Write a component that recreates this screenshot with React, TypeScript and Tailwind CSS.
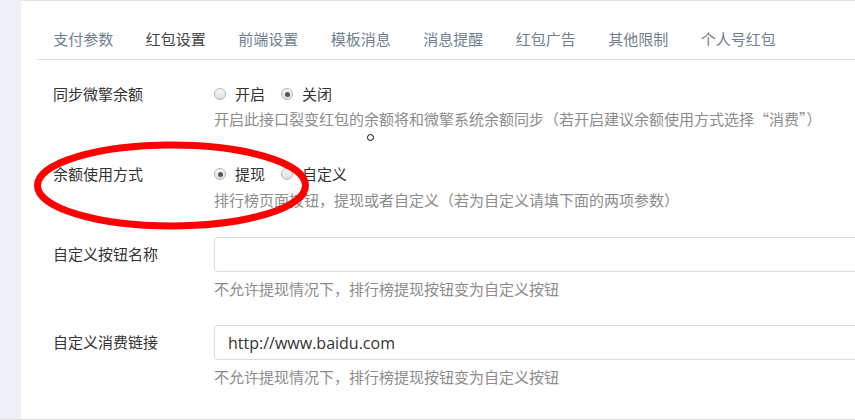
const cjk = "font-['Noto_Sans_CJK_SC','Noto_Sans',sans-serif]";

const tabs = ["支付参数", "红包设置", "前端设置", "模板消息", "消息提醒", "红包广告", "其他限制", "个人号红包"];

function Radio({ checked }: { checked?: boolean }) {
  return (
    <span className="inline-flex h-[12px] w-[12px] items-center justify-center rounded-full border border-[#b5b5b5] bg-linear-to-b from-[#fbfbfb] to-[#dedede]">
      {checked && <span className="h-[5px] w-[5px] rounded-full bg-[#555]" />}
    </span>
  );
}

function RadioGroup({ options, value }: { options: string[]; value: number }) {
  return (
    <div className="flex h-[20px] items-center">
      {options.map((o, i) => (
        <label key={o} className={`flex items-center ${i > 0 ? "ml-[16px]" : ""}`}>
          <Radio checked={i === value} />
          <span className="ml-[9px] leading-[20px] text-[#333]">{o}</span>
        </label>
      ))}
    </div>
  );
}

function Help({ children, className = "" }: { children: React.ReactNode; className?: string }) {
  return <div className={`leading-[20px] text-[#8c8c8c] ${className}`}>{children}</div>;
}

export default function App() {
  return (
    <div className={`relative flex h-[420px] w-full overflow-hidden border-b border-[#dcdcdc] bg-white text-[15px] ${cjk}`}>
      <div className="w-[21px] shrink-0 bg-[#f0f1f6]" />
      <div className="flex-1 border-t border-[#e3e3e3] bg-white">
        <div className="ml-[16px] flex border-b border-[#e0e0e0]">
          {tabs.map((t, i) => (
            <div
              key={t}
              className={`px-[16.25px] pt-[28px] pb-[10px] leading-[20px] whitespace-nowrap ${i === 1 ? "text-[#444]" : "text-[#6f7f90]"}`}
            >
              {t}
            </div>
          ))}
        </div>

        <div className="pl-[32px]">
          <div className="mt-[24px] flex">
            <div className="h-[20px] w-[161px] shrink-0 leading-[20px] text-[#333]">同步微擎余额</div>
            <div>
              <RadioGroup options={["开启", "关闭"]} value={1} />
              <Help className="mt-[5px] whitespace-nowrap">
                开启此接口裂变红包的余额将和微擎系统余额同步（若开启建议余额使用方式选择“消费”）
              </Help>
            </div>
          </div>

          <div className="mt-[35px] flex">
            <div className="h-[20px] w-[161px] shrink-0 leading-[20px] text-[#333]">余额使用方式</div>
            <div>
              <RadioGroup options={["提现", "自定义"]} value={0} />
              <Help className="mt-[6px] whitespace-nowrap">
                排行榜页面按钮，提现或者自定义（若为自定义请填下面的两项参数）
              </Help>
            </div>
          </div>

          <div className="mt-[27px] flex">
            <div className="flex h-[35px] w-[161px] shrink-0 items-center text-[#333]">自定义按钮名称</div>
            <div>
              <input
                className="h-[35px] w-[700px] rounded-[4px] border border-[#dcdcdc] px-[13px] font-['Open_Sans',sans-serif] text-[15.5px] text-[#333] outline-none"
                defaultValue=""
              />
              <Help className="mt-[7px] whitespace-nowrap">不允许提现情况下，排行榜提现按钮变为自定义按钮</Help>
            </div>
          </div>

          <div className="mt-[26px] flex">
            <div className="flex h-[35px] w-[161px] shrink-0 items-center text-[#333]">自定义消费链接</div>
            <div>
              <input
                className="h-[35px] w-[700px] rounded-[4px] border border-[#dcdcdc] px-[13px] font-['Open_Sans',sans-serif] text-[16px] text-[#333] outline-none"
                defaultValue="http://www.baidu.com"
              />
              <Help className="mt-[7px] whitespace-nowrap">不允许提现情况下，排行榜提现按钮变为自定义按钮</Help>
            </div>
          </div>
        </div>
      </div>

      {/* red annotation ellipse */}
      <svg className="absolute top-[141px] left-[33px]" width="277" height="89" viewBox="0 0 277 89">
        <ellipse cx="138.5" cy="44.5" rx="134" ry="40.5" fill="none" stroke="#ff0000" strokeWidth="7" />
      </svg>

      {/* mouse cursor */}
      <div className="absolute top-[134px] left-[367px] h-[7px] w-[7px] rounded-full border border-black bg-white" />
    </div>
  );
}
